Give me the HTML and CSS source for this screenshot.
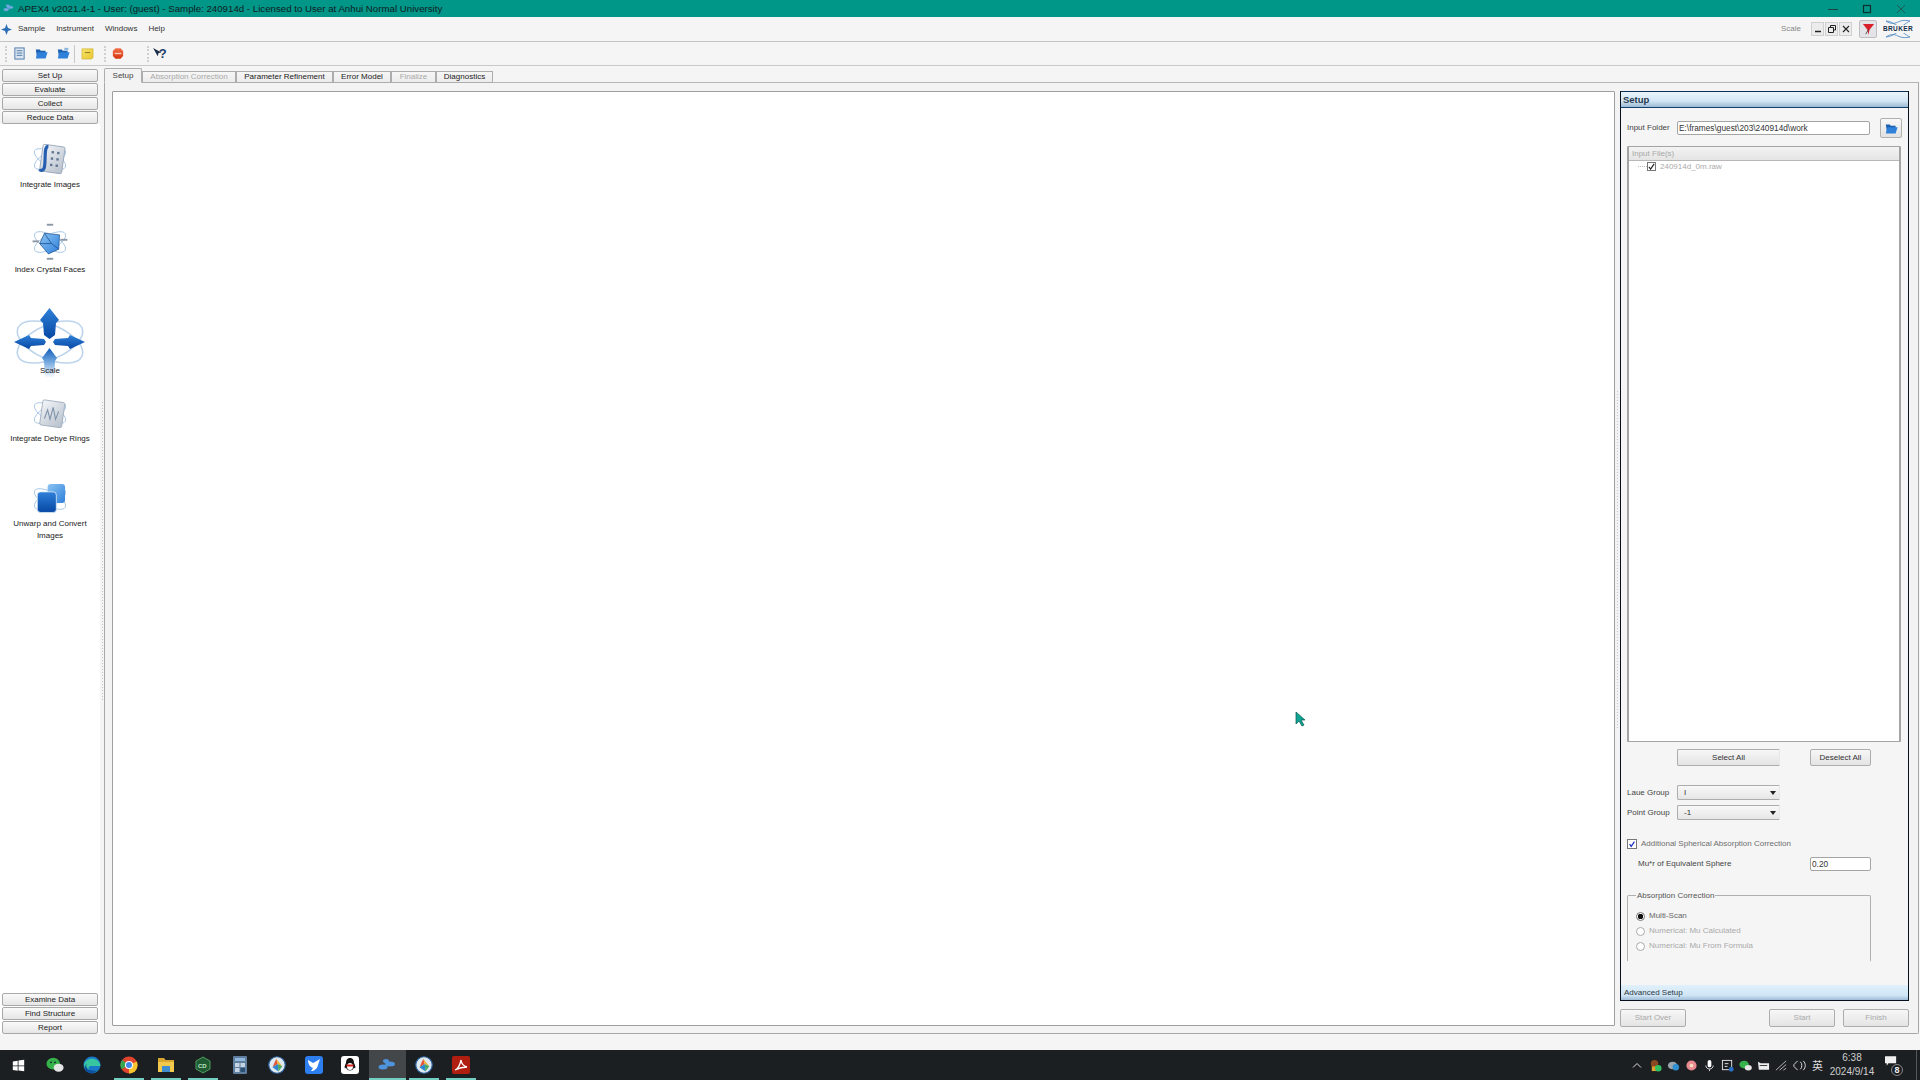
FILE: index.html
```html
<!DOCTYPE html>
<html lang="en">
<head>
<meta charset="utf-8">
<title>APEX4</title>
<link rel="stylesheet" href="styles.css">
</head>
<body>
<svg class="defs" width="0" height="0" aria-hidden="true">
  <defs>
    <linearGradient id="blueDark" x1="0" y1="0" x2="0" y2="1"><stop offset="0" stop-color="#2f80d8"/><stop offset="1" stop-color="#0648a4"/></linearGradient>
    <linearGradient id="blueSoft" x1="0" y1="0" x2="1" y2="1"><stop offset="0" stop-color="#8cc4f2"/><stop offset="1" stop-color="#2f7fdc"/></linearGradient>
    <linearGradient id="arrowFade" x1="0" y1="0" x2="0" y2="1"><stop offset="0" stop-color="#0f5cba"/><stop offset=".45" stop-color="#6fa6dd"/><stop offset="1" stop-color="#ffffff"/></linearGradient>
    <linearGradient id="sheet" x1="0" y1="0" x2="1" y2="1"><stop offset="0" stop-color="#f4f6f9"/><stop offset="1" stop-color="#b6bfcb"/></linearGradient>
    <linearGradient id="stopRed" x1="0" y1="0" x2="0" y2="1"><stop offset="0" stop-color="#f0704a"/><stop offset="1" stop-color="#d63510"/></linearGradient>
    <linearGradient id="noteYellow" x1="0" y1="0" x2="1" y2="1"><stop offset="0" stop-color="#f8e46a"/><stop offset="1" stop-color="#e8c630"/></linearGradient>
    <symbol id="orbits" viewBox="0 0 48 48">
      <g fill="none" stroke="#a9c6e4" stroke-width="1.100">
        <ellipse cx="24" cy="24" rx="22" ry="9" transform="rotate(28 24 24)"/>
        <ellipse cx="24" cy="24" rx="22" ry="9" transform="rotate(-28 24 24)"/>
      </g>
    </symbol>
    <symbol id="folder-blue" viewBox="0 0 16 16">
      <path d="M1 3h5l1 1.500h6V13H2.500z" fill="#1b5fb0"/>
      <path d="M3 6.500h12.500L13 14H1z" fill="#2f80d8"/>
    </symbol>
    <symbol id="molecule" viewBox="0 0 24 24">
      <circle cx="12" cy="12" r="11" fill="#dfe9f2" stroke="#2a5f9a" stroke-width="1.600"/>
      <path d="M6 15 11 3.500l2 7z" fill="#e2553a"/>
      <path d="M11 3.500l8 10-6-3z" fill="#f2b430"/>
      <path d="M6 15l7-4.500 1 10z" fill="#2e86d0"/>
      <path d="M13 10.500l6 3-5 7z" fill="#47a868"/>
    </symbol>
  </defs>
</svg>

<div class="app">
  <header class="titlebar">
    <div class="title-left">
      <svg class="title-icon" viewBox="0 0 14 12"><g fill="#6ea6e0"><ellipse cx="4" cy="8" rx="3.500" ry="2"/><ellipse cx="9" cy="5" rx="4" ry="2"/><ellipse cx="6" cy="3" rx="2.500" ry="1.500"/></g></svg>
      <span>APEX4 v2021.4-1 - User: (guest) - Sample: 240914d - Licensed to User at Anhui Normal University</span>
    </div>
    <div class="window-controls">
      <svg viewBox="0 0 10 10"><path d="M0 5.500h10" stroke="#17453f" stroke-width="1"/></svg>
      <svg viewBox="0 0 10 10"><rect x="1.500" y="1.500" width="7" height="7" fill="none" stroke="#10302c" stroke-width="1.200"/></svg>
      <svg viewBox="0 0 10 10"><path d="M1 1l8 8M9 1l-8 8" stroke="#1f5a53" stroke-width="1"/></svg>
    </div>
  </header>

  <nav class="menubar">
    <svg class="menu-logo" viewBox="0 0 12 12"><path d="M6 0l1.600 4.400L12 6 7.600 7.600 6 12 4.400 7.600 0 6l4.400-1.600z" fill="#2a6fb5"/></svg>
    <span class="menu-item">Sample</span>
    <span class="menu-item m2">Instrument</span>
    <span class="menu-item m2">Windows</span>
    <span class="menu-item m2">Help</span>
    <div class="menu-right">
      <span class="scale-label">Scale</span>
      <div class="mdi-btns">
        <span class="mdi-btn"><svg viewBox="0 0 10 10"><path d="M2 7.500h6" stroke="#222" stroke-width="1.500"/></svg></span>
        <span class="mdi-btn"><svg viewBox="0 0 10 10"><path d="M3.500 3.500V1.500h5v4.500H6.500M1.500 3.500h5v5h-5z" fill="none" stroke="#222" stroke-width="1"/></svg></span>
        <span class="mdi-btn"><svg viewBox="0 0 10 10"><path d="M2 2l6 6M8 2l-6 6" stroke="#222" stroke-width="1.100"/></svg></span>
      </div>
      <span class="filter-btn"><svg viewBox="0 0 14 14"><path d="M1 1h12L8 7.500 7 13 6 7.500z" fill="#d8202a"/><path d="M4 12 7 7" stroke="#222" stroke-width=".8"/></svg></span>
      <span class="bruker">
        <svg class="bruker-waves" viewBox="0 0 34 20"><path d="M5 2c5 0 8 3 12 5s7-3 12-5M5 18c5 0 8-3 12-5s7 3 12 5M5 2c4 3 8 3 12 1s8-2 12-1M5 18c4-3 8-3 12-1s8 2 12 1" fill="none" stroke="#4a86c0" stroke-width=".8"/></svg>
        <b>BRUKER</b>
      </span>
    </div>
  </nav>

  <div class="toolbar">
    <span class="grip"></span>
    <svg class="tool t-doc" viewBox="0 0 14 14"><rect x="2" y="1" width="10" height="12" fill="#dbe5f0" stroke="#4a78a8"/><path d="M4 4h6M4 6.500h6M4 9h6" stroke="#4a78a8"/></svg>
    <svg class="tool t-open" viewBox="0 0 16 16"><use href="#folder-blue"/></svg>
    <svg class="tool t-open2" viewBox="0 0 16 16"><use href="#folder-blue"/><path d="M9 1h5v3h-5z" fill="#8fb9e4"/></svg>
    <span class="sep"></span>
    <svg class="tool t-note" viewBox="0 0 14 14"><path d="M1 2h12v9.500l-2 1.500H1z" fill="url(#noteYellow)" stroke="#c9a820" stroke-width=".6"/><path d="M4 6h6" stroke="#8a7420"/></svg>
    <span class="grip g2"></span>
    <svg class="tool t-stop" viewBox="0 0 14 14"><path d="M4 1h6l3 3v6l-3 3H4l-3-3V4z" fill="url(#stopRed)"/><path d="M3 7h8" stroke="#f9c9b8" stroke-width="1.600"/></svg>
    <span class="grip g3"></span>
    <svg class="tool t-help" viewBox="0 0 16 14"><path d="M0 1l5 9 1-3.500 3-.5z" fill="#1c2f4a"/><text x="6" y="12" class="help-q">?</text></svg>
  </div>

  <main class="workspace">
    <aside class="sidebar">
      <div class="nav-group">
        <button class="nav-btn">Set Up</button>
        <button class="nav-btn">Evaluate</button>
        <button class="nav-btn">Collect</button>
        <button class="nav-btn">Reduce Data</button>
      </div>
      <div class="tasks">
        <div class="task task-a">
          <svg class="task-icon i36" viewBox="0 0 48 48"><use href="#orbits"/><rect x="13" y="7" width="28" height="34" rx="2" fill="url(#sheet)" stroke="#8fa0b5" transform="rotate(8 27 24)"/><path d="M22 8c-6 0-3 14-5 26-1 5-5 5-6 3" fill="none" stroke="#275fb0" stroke-width="4"/><g fill="#5f7590"><rect x="26" y="14" width="3" height="3"/><rect x="33" y="15" width="3" height="3"/><rect x="25" y="22" width="3" height="3"/><rect x="32" y="23" width="3" height="3"/><rect x="24" y="30" width="3" height="3"/><rect x="31" y="31" width="3" height="3"/></g></svg>
          <span>Integrate Images</span>
        </div>
        <div class="task task-b">
          <svg class="task-icon i36" viewBox="0 0 48 48"><use href="#orbits"/><path d="M17 13 36 15 35 33 22 39 11 26z" fill="url(#blueSoft)" stroke="#255a98"/><path d="M17 13 26 26 35 33M26 26 11 26" stroke="#1c4f8e" fill="none"/><g fill="#8a97a6"><rect x="20" y="1" width="8" height="2.400"/><rect x="37" y="20" width="9" height="2.400"/><rect x="2" y="22" width="8" height="2.400"/><rect x="20" y="44" width="8" height="2.400"/></g></svg>
          <span>Index Crystal Faces</span>
        </div>
        <div class="task task-c">
          <svg class="task-icon i72" viewBox="0 0 72 70"><g fill="none" stroke="#bcd4ec" stroke-width="1.600"><ellipse cx="36" cy="34" rx="35" ry="17" transform="rotate(24 36 34)"/><ellipse cx="36" cy="34" rx="35" ry="17" transform="rotate(-24 36 34)"/></g><path d="M35.500 0 45 12 42 15 41 27 35.500 31 30 27 29 15 26 12z" fill="url(#blueDark)"/><path d="M0 34 15 27 17 30 30 31 32 34 30 37 17 38 15 41z" fill="url(#blueDark)"/><path d="M71 34 56 27 54 30 41 31 39 34 41 37 54 38 56 41z" fill="url(#blueDark)"/><path d="M35.500 40 43 50 41 53 40 70H31L30 53 28 50z" fill="url(#arrowFade)"/></svg>
          <span>Scale</span>
        </div>
        <div class="task task-d">
          <svg class="task-icon i36" viewBox="0 0 48 48"><use href="#orbits"/><rect x="13" y="9" width="28" height="32" rx="2" fill="url(#sheet)" stroke="#9aa8b8" transform="rotate(8 27 24)"/><path d="M17 31 21 20 24 32 28 17 31 32 35 22" fill="none" stroke="#7f93aa" stroke-width="1.400"/></svg>
          <span>Integrate Debye Rings</span>
        </div>
        <div class="task task-e">
          <svg class="task-icon i36" viewBox="0 0 48 48"><use href="#orbits"/><rect x="21" y="5" width="22" height="24" rx="4" fill="url(#blueSoft)"/><rect x="8" y="15" width="24" height="26" rx="4" fill="url(#blueDark)" stroke="#dcebf9"/></svg>
          <span>Unwarp and Convert<br>Images</span>
        </div>
      </div>
      <div class="nav-group bottom">
        <button class="nav-btn">Examine Data</button>
        <button class="nav-btn">Find Structure</button>
        <button class="nav-btn">Report</button>
      </div>
    </aside>

    <div class="splitter"></div>

    <section class="tabarea">
      <div class="tabs">
        <span class="tab active">Setup</span>
        <span class="tab disabled w94">Absorption Correction</span>
        <span class="tab w97">Parameter Refinement</span>
        <span class="tab w58">Error Model</span>
        <span class="tab disabled w45">Finalize</span>
        <span class="tab w57">Diagnostics</span>
      </div>
      <div class="tabpane">
        <div class="canvas"></div>
        <div class="pane-split"></div>
        <div class="rightcol">
          <div class="setup">
            <h2 class="setup-head">Setup</h2>
            <div class="setup-body">
              <div class="row folder-row">
                <label class="lbl">Input Folder</label>
                <span class="field folder-field">E:\frames\guest\203\240914d\work</span>
                <span class="folder-btn"><svg viewBox="0 0 16 16"><use href="#folder-blue"/></svg></span>
              </div>
              <div class="tree">
                <div class="tree-head">Input File(s)</div>
                <div class="tree-item"><i class="dots"></i><span class="tree-check"><svg viewBox="0 0 8 8"><path d="M1 4.500 3 7l4-6" fill="none" stroke="#222" stroke-width="1.300"/></svg></span><span>240914d_0m.raw</span></div>
              </div>
              <div class="row select-row">
                <span class="btn sel-all">Select All</span>
                <span class="btn desel-all">Deselect All</span>
              </div>
              <div class="row combo-row">
                <label class="lbl">Laue Group</label>
                <span class="combo">I<i class="caret"></i></span>
              </div>
              <div class="row combo-row second">
                <label class="lbl">Point Group</label>
                <span class="combo">-1<i class="caret"></i></span>
              </div>
              <div class="row check-row">
                <span class="blue-check"><svg viewBox="0 0 10 10"><path d="M2 5.200 4 8l4-6" fill="none" stroke="#1d2fc0" stroke-width="1.500"/></svg></span>
                <span class="dim">Additional Spherical Absorption Correction</span>
              </div>
              <div class="row mu-row">
                <label class="lbl">Mu*r of Equivalent Sphere</label>
                <span class="field mu-field">0.20</span>
              </div>
              <fieldset class="group">
                <legend>Absorption Correction</legend>
                <div class="radio on"><i></i><span>Multi-Scan</span></div>
                <div class="radio off"><i></i><span>Numerical: Mu Calculated</span></div>
                <div class="radio off"><i></i><span>Numerical: Mu From Formula</span></div>
              </fieldset>
            </div>
            <div class="setup-foot">Advanced Setup</div>
          </div>
          <div class="actions">
            <span class="btn off-btn">Start Over</span>
            <span class="act-right">
              <span class="btn off-btn">Start</span>
              <span class="btn off-btn">Finish</span>
            </span>
          </div>
        </div>
      </div>
    </section>
  </main>

  <div class="statusgap"></div>

  <footer class="taskbar">
    <div class="tb-apps">
      <span class="tb-app"><svg viewBox="0 0 16 16"><path fill="#fff" d="M1 3l6-1v6H1zM8 1.800 15 1v7H8zM1 9h6v5.500l-6-1zM8 9h7v6l-7-1z"/></svg></span>
      <span class="tb-app"><svg viewBox="0 0 20 18"><ellipse cx="8" cy="7.500" rx="7.500" ry="6.500" fill="#36b24a"/><ellipse cx="14" cy="12" rx="5.500" ry="4.500" fill="#e6e6e6"/><circle cx="5.500" cy="6" r="1" fill="#123"/><circle cx="10" cy="6" r="1" fill="#123"/></svg></span>
      <span class="tb-app"><svg viewBox="0 0 18 18"><circle cx="9" cy="9" r="8.500" fill="#1a78c8"/><path d="M1 9c1-8 15-9 16.500 1H8c-3 0-3 3-1 4 2 2 6 1 8 0-3 4-12 4-14-5z" fill="#38c6a0"/><path d="M7 14c-3-1-5-4-3-7-3 3-3 9 3 10 3 .5 6-.5 8-3-2 1-5 1-8 0z" fill="#0c4f9c"/></svg></span>
      <span class="tb-app"><svg viewBox="0 0 18 18"><circle cx="9" cy="9" r="8.500" fill="#e0442f"/><path d="M9 9 1.600 13.200A8.500 8.500 0 0 1 2 4z" fill="#37a650"/><path d="M9 9 16.800 5.500A8.500 8.500 0 0 1 9 17.500z" fill="#f7c32e"/><circle cx="9" cy="9" r="4" fill="#fff"/><circle cx="9" cy="9" r="3" fill="#4287ea"/></svg></span>
      <span class="tb-app"><svg viewBox="0 0 18 16"><path d="M1 1h6l1.500 2H17v3H1z" fill="#d9a630"/><path d="M1 5h16v10H1z" fill="#f2c94c"/><path d="M5 9h8v6H5z" fill="#3f8ecf"/></svg></span>
      <span class="tb-app"><svg viewBox="0 0 18 18"><path d="M9 1l7 4v8l-7 4-7-4V5z" fill="#1f5a32" stroke="#4f9e5e"/><text x="4" y="12" class="cd">CD</text></svg></span>
      <span class="tb-app"><svg viewBox="0 0 14 18"><rect width="14" height="18" rx="1" fill="#5f7d9c"/><rect x="2" y="2" width="10" height="3" fill="#8fb8dc"/><rect x="2" y="7" width="4.500" height="4" fill="#c4d4e2"/><rect x="7.500" y="7" width="4.500" height="4" fill="#c4d4e2"/><rect x="2" y="12" width="4.500" height="4" fill="#c4d4e2"/><rect x="7.500" y="12" width="4.500" height="4" fill="#2b4f75"/></svg></span>
      <span class="tb-app"><svg viewBox="0 0 24 24"><use href="#molecule"/></svg></span>
      <span class="tb-app"><svg viewBox="0 0 18 18"><rect width="18" height="18" rx="3" fill="#2d7ff0"/><path d="M3 4l5 3 2-1 5-3-2 6c-1 4-4 6-7 6l2-3c-3-1-5-4-5-8z" fill="#fff"/></svg></span>
      <span class="tb-app"><svg viewBox="0 0 18 18"><rect width="18" height="18" rx="3" fill="#fff"/><path d="M9 2c3 0 4 2.500 4 5 1 2 2 4 1 5.500l-1-1c-.5 2-2 3-4 3s-3.500-1-4-3l-1 1C3 11 4 9 5 7c0-2.500 1-5 4-5z" fill="#111"/><ellipse cx="9" cy="10.500" rx="3" ry="3.500" fill="#fff"/><path d="M5.500 8.500h7v2h-7z" fill="#d8231c"/></svg></span>
      <span class="tb-app tb-active"><svg viewBox="0 0 18 14"><g fill="#4f93dc"><ellipse cx="5" cy="9" rx="4.500" ry="2.500"/><ellipse cx="12" cy="6" rx="5" ry="2.500"/><ellipse cx="8" cy="3" rx="3" ry="2"/></g><path d="M11 10l4 3" stroke="#444" stroke-width="2"/></svg></span>
      <span class="tb-app"><svg viewBox="0 0 24 24"><use href="#molecule"/></svg></span>
      <span class="tb-app"><svg viewBox="0 0 18 18"><rect width="18" height="18" rx="2" fill="#b01e10"/><path d="M3 14c3-1 5-5 6-10 .5 4 2 6 6 7-4 0-8 1-12 3z" fill="none" stroke="#fff" stroke-width="1.300"/></svg></span>
    </div>
    <div class="tray">
      <svg class="tr chev" viewBox="0 0 10 6"><path d="M1 5l4-4 4 4" fill="none" stroke="#ddd" stroke-width="1"/></svg>
      <svg class="tr" viewBox="0 0 14 14"><circle cx="6" cy="5" r="4" fill="#8a4a20"/><rect x="3" y="8" width="7" height="5" fill="#e0a030"/><circle cx="10" cy="10" r="3.500" fill="#30c060"/></svg>
      <svg class="tr" viewBox="0 0 14 14"><ellipse cx="6" cy="7" rx="5" ry="4" fill="#9aa5ad"/><circle cx="9.500" cy="9" r="3.500" fill="#2f8fd0"/></svg>
      <svg class="tr" viewBox="0 0 14 14"><circle cx="7" cy="7" r="5.500" fill="#e88a90"/><circle cx="7" cy="7" r="2" fill="#f7e0c0"/></svg>
      <svg class="tr" viewBox="0 0 14 14"><rect x="5" y="1" width="4" height="8" rx="2" fill="#fff"/><path d="M3 7c0 5 8 5 8 0M7 11v2" fill="none" stroke="#ddd"/></svg>
      <svg class="tr" viewBox="0 0 14 14"><rect x="1.500" y="1.500" width="10" height="10" fill="none" stroke="#e6e6e6"/><path d="M4 5h4M4 8h3" stroke="#e6e6e6"/><circle cx="11" cy="11" r="2.600" fill="#2a6fc4"/></svg>
      <svg class="tr" viewBox="0 0 14 14"><ellipse cx="5.500" cy="6" rx="5" ry="4.200" fill="#36b24a"/><ellipse cx="10" cy="9.500" rx="3.800" ry="3" fill="#e6e6e6"/></svg>
      <svg class="tr" viewBox="0 0 14 14"><path d="M1 3l3 1.500h9v7H2z" fill="#eee"/><path d="M3 7h8" stroke="#333"/></svg>
      <svg class="tr" viewBox="0 0 14 14"><path d="M1 12 12 2M5 12 12 6M9 12l3-2" stroke="#bbb" fill="none"/></svg>
      <svg class="tr" viewBox="0 0 14 14"><path d="M5 2 1 6v2l4 4" fill="none" stroke="#e6e6e6"/><path d="M8 3c2 2 2 6 0 8M11 2c3 3 3 7 0 10" fill="none" stroke="#e6e6e6"/></svg>
      <span class="tr-text">英</span>
      <div class="clock"><span>6:38</span><span>2024/9/14</span></div>
      <span class="notify"><svg viewBox="0 0 14 12"><path d="M0 0h13v8H4L2 11V8H0z" fill="#f0f0f0"/></svg><b>8</b></span>
      <span class="show-desktop"></span>
    </div>
  </footer>

  <svg class="cursor" viewBox="0 0 12 16"><path d="M1 1v12l3-3 3 5 2-1-3-5h4z" fill="#0fa595" stroke="#07574f" stroke-width=".7"/></svg>
</div>
</body>
</html>
```

FILE: styles.css
```css
* { box-sizing: border-box; }
html, body { margin: 0; padding: 0; height: 100%; overflow: hidden; }
body { font: 8px/1.2 "Liberation Sans", Arial, sans-serif; color: #1c1c1c; background: #f5f5f5; }
.defs { position: absolute; }
.app { position: relative; width: 1920px; height: 1080px; display: flex; flex-direction: column; }

/* title bar */
.titlebar { height: 17px; flex: none; background: #009688; color: #10201e; display: flex; align-items: center; justify-content: space-between; font-size: 9.700px; }
.title-left { display: flex; align-items: center; gap: 4px; padding-left: 3px; }
.title-icon { width: 11px; height: 10px; }
.window-controls { display: flex; gap: 24px; padding-right: 14px; }
.window-controls svg { width: 10px; height: 10px; }

/* menu */
.menubar { height: 25px; flex: none; background: #f5f5f5; border-bottom: 1px solid #c4c4c4; display: flex; align-items: center; padding-left: 1px; }
.menu-logo { width: 11px; height: 11px; margin-right: 6px; }
.menu-item { color: #333; }
.m2 { margin-left: 11px; }
.menu-right { margin-left: auto; display: flex; align-items: center; }
.scale-label { color: #888; margin-right: 10px; }
.mdi-btns { display: flex; gap: 1px; }
.mdi-btn { width: 13px; height: 14px; background: #ececec; border: 1px solid #d0d0d0; display: flex; align-items: center; justify-content: center; }
.mdi-btn svg { width: 10px; height: 10px; }
.filter-btn { width: 18px; height: 18px; margin-left: 7px; background: #e4e4e8; border: 1px solid #bdbdc2; border-radius: 2px; display: flex; align-items: center; justify-content: center; }
.filter-btn svg { width: 13px; height: 13px; }
.bruker { width: 34px; height: 20px; margin: 0 5px 0 4px; position: relative; display: flex; align-items: center; justify-content: center; }
.bruker b { position: relative; font-size: 6.500px; letter-spacing: .4px; color: #16304a; background: #f5f5f5; }
.bruker-waves { position: absolute; inset: 0; width: 34px; height: 20px; }

/* toolbar */
.toolbar { height: 24px; flex: none; background: #f5f5f5; border-bottom: 1px solid #c9c9c9; display: flex; align-items: center; padding-left: 5px; }
.grip { width: 3px; height: 16px; flex: none; border-left: 2px dotted #d0d0d0; }
.tool { width: 13px; height: 13px; flex: none; }
.t-doc { margin-left: 5px; }
.t-open { margin-left: 9px; }
.t-open2 { margin-left: 9px; }
.sep { width: 1px; height: 18px; background: #c8c8c8; margin-left: 4px; }
.t-note { margin-left: 6px; }
.g2 { margin-left: 10px; }
.t-stop { margin-left: 5px; width: 12px; }
.g3 { margin-left: 23px; }
.t-help { margin-left: 3px; width: 15px; }
.help-q { font: 700 14px "Liberation Sans", sans-serif; fill: #1c3f6c; }

/* workspace */
.workspace { flex: 1; display: flex; min-height: 0; }
.sidebar { width: 100px; flex: none; background: #fff; display: flex; flex-direction: column; padding: 2px 0 0 2px; }
.nav-group { display: flex; flex-direction: column; gap: 1px; background: #f5f5f5; margin: -2px 0 0 -2px; padding: 3px 2px 0 2px; }
.nav-group.bottom { margin: 0 0 0 -2px; background: #fff; padding-top: 0; padding-bottom: 0; }
.nav-btn { height: 13px; padding: 0; font: inherit; line-height: 11px; color: #222; border: 1px solid #a8a8a8; border-radius: 2px; background: linear-gradient(#fafafa, #e6e6e6); }
.tasks { flex: 1; display: flex; flex-direction: column; align-items: center; padding-right: 2px; }
.task { display: flex; flex-direction: column; align-items: center; text-align: center; line-height: 12px; color: #222; }
.task span { position: relative; }
.task-icon { display: block; }
.i36 { width: 38px; height: 38px; }
.i72 { width: 72px; height: 70px; margin-bottom: -13px; }
.task-a { margin-top: 16px; gap: 1px; }
.task-b { margin-top: 32px; gap: 3px; }
.task-c { margin-top: 32px; }
.task-d { margin-top: 17px; gap: 1px; }
.task-e { margin-top: 35px; gap: 0; }
.splitter { width: 3px; flex: none; margin-left: 1px; background: repeating-linear-gradient(#f5f5f5 0 2px, #c4c4c4 2px 3px) center / 1px 300px no-repeat; }

/* tabs */
.tabarea { flex: 1; min-width: 0; display: flex; flex-direction: column; padding-right: 1px; padding-top: 4px; }
.tabs { height: 13px; flex: none; display: flex; align-items: flex-end; position: relative; z-index: 1; }
.tab { height: 12px; border: 1px solid #adadad; background: linear-gradient(#f6f6f6, #ececec); display: flex; align-items: center; justify-content: center; color: #222; }
.tab.active { width: 38px; height: 15px; background: #f3f3f3; border-bottom-color: #f3f3f3; color: #444; border-radius: 2px 2px 0 0; }
.tab.disabled { color: #aaa; }
.w94 { width: 94px; }
.w97 { width: 97px; }
.w58 { width: 58px; }
.w45 { width: 45px; }
.w57 { width: 57px; }
.tabpane { flex: 1; min-height: 0; background: #f3f3f3; border: 1px solid #a8a8a8; border-top-color: #b6b6b6; border-radius: 0 0 2px 2px; display: flex; padding: 8px 9px 6px 7px; margin-top: -1px; }
.canvas { flex: 1; margin-bottom: 1px; background: #fff; border: 1px solid #9f9f9f; border-radius: 1px; }
.pane-split { width: 5px; flex: none; background: repeating-linear-gradient(#f3f3f3 0 2px, #c8c8c8 2px 3px) center / 1px 340px no-repeat; }
.rightcol { width: 289px; flex: none; display: flex; flex-direction: column; gap: 8px; }

/* setup panel */
.setup { flex: 1; min-height: 0; display: flex; flex-direction: column; background: #f5f5f5; border: 1px solid #06101e; border-width: 0 1px 1px; }
.setup-head { height: 17px; flex: none; margin: 0; padding: 1px 0 0 2px; font: 700 9.500px/13px "Liberation Sans", sans-serif; color: #26384c; border-top: 1px solid #0d2f56; border-bottom: 1px solid #12406e; background: linear-gradient(#e9f4fc, #d3e6f5 60%, #9cb9d4); }
.setup-body { flex: 1; min-height: 0; display: flex; flex-direction: column; padding: 10px 6px 0 6px; }
.setup-foot { height: 15px; flex: none; padding-left: 3px; line-height: 15px; color: #2b3744; background: linear-gradient(#e1f1fb, #cfe5f5 70%, #9fbbd6); }
.row { display: flex; align-items: center; flex: none; }
.lbl { width: 50px; flex: none; color: #444; }
.field { height: 14px; background: #fff; border: 1px solid #a4a4a4; border-radius: 2px; padding-left: 1px; line-height: 12px; color: #333; display: block; font-size: 8.300px; }
.folder-row { height: 20px; }
.folder-field { width: 194px; }
.folder-btn { width: 22px; height: 20px; margin-left: 10px; border: 1px solid #b0b0b0; border-radius: 2px; background: linear-gradient(#f8f8f8, #e2e2e2); display: flex; align-items: center; justify-content: center; }
.folder-btn svg { width: 13px; height: 13px; }
.tree { height: 596px; flex: none; margin-top: 8px; margin-right: 1px; background: #fff; border: 1px solid #a4a4a4; border-left-width: 2px; border-right-width: 2px; border-radius: 1px; }
.tree-head { height: 14px; padding-left: 3px; line-height: 13px; color: #a8a8a8; background: linear-gradient(#f3f3f3, #e5e5e5); border-bottom: 1px solid #b8b8b8; }
.tree-item { height: 11px; display: flex; align-items: center; color: #aaa; padding-left: 9px; }
.dots { width: 9px; border-top: 1px dotted #b8b8b8; }
.tree-check { width: 9px; height: 9px; border: 1px solid #777; margin: 0 4px 0 0; display: flex; align-items: center; justify-content: center; }
.tree-check svg { width: 7px; height: 7px; }
.btn { height: 17px; display: flex; align-items: center; justify-content: center; border: 1px solid #adadad; border-radius: 2px; background: linear-gradient(#f7f7f7, #e4e4e4); color: #333; }
.select-row { margin-top: 7px; padding-left: 50px; }
.sel-all { width: 103px; border-right-color: #e8e8e8; border-radius: 2px 0 0 2px; }
.desel-all { width: 61px; margin-left: 30px; }
.combo-row { margin-top: 19px; }
.combo-row.second { margin-top: 5px; }
.combo { width: 103px; height: 15px; border: 1px solid #adadad; border-right-color: #e8e8e8; border-radius: 2px 0 0 2px; background: linear-gradient(#f8f8f8, #e6e6e6); padding-left: 6px; display: flex; align-items: center; justify-content: space-between; padding-right: 3px; color: #333; }
.caret { width: 0; height: 0; border: 3px solid transparent; border-top: 4px solid #222; border-bottom: 0; }
.check-row { margin-top: 19px; }
.blue-check { width: 10px; height: 10px; border: 1px solid #777; background: #fff; display: flex; }
.blue-check svg { width: 8px; height: 8px; }
.dim { color: #6f6f6f; margin-left: 4px; }
.mu-row { margin-top: 8px; padding-left: 11px; }
.mu-row .lbl { width: 172px; }
.mu-field { width: 61px; }
.group { width: 244px; height: 71px; margin: 20px 0 0; padding: 8px 0 0 8px; border: 1px solid #b0b0b0; border-bottom-color: #f5f5f5; border-radius: 2px; }
.group legend { padding: 0 1px; margin-left: 0; color: #555; }
.radio { height: 15px; display: flex; align-items: center; gap: 4px; color: #aaa; }
.radio i { width: 9px; height: 9px; border-radius: 50%; border: 1px solid #aaa; background: #fff; }
.radio.on { color: #666; }
.radio.on i { border-color: #777; background: radial-gradient(#111 0 2.500px, #fff 3px); }
.actions { height: 18px; flex: none; display: flex; justify-content: space-between; }
.act-right { display: flex; gap: 8px; }
.off-btn { width: 66px; height: 18px; color: #aaa; }

/* bottom */
.statusgap { height: 16px; flex: none; background: #f5f5f5; }
.taskbar { height: 30px; flex: none; background: #1c1f22; display: flex; justify-content: space-between; color: #ddd; }
.tb-apps { display: flex; }
.tb-app { width: 36.900px; height: 30px; display: flex; align-items: center; justify-content: center; }
.tb-app svg { width: 18px; height: 18px; }
.tb-app:nth-child(1) svg { width: 13px; height: 13px; }
.tb-app:nth-child(n+4):nth-child(-n+6), .tb-app:nth-child(n+12) { background: linear-gradient(#74cfc3, #74cfc3) center bottom / 30px 2px no-repeat; }
.tb-active { background: linear-gradient(#74cfc3, #74cfc3) center bottom / 100% 2px no-repeat, #44474a; }
.cd { font: 700 6px "Liberation Sans", sans-serif; fill: #bfe6c4; }
.tray { display: flex; align-items: center; }
.tr { width: 13px; height: 13px; margin-right: 5px; }
.chev { width: 10px; height: 7px; margin-right: 7px; }
.tr-text { font: 11px "Noto Sans CJK SC", sans-serif; color: #ddd; margin-left: 1px; }
.clock { width: 62px; margin-left: -2px; display: flex; flex-direction: column; align-items: center; font-size: 10px; line-height: 14px; color: #cfcfcf; }
.notify { width: 20px; height: 22px; margin-left: 2px; position: relative; }
.notify svg { width: 12px; height: 11px; display: block; margin-top: 2px; }
.notify b { position: absolute; right: 2px; bottom: 0; width: 12px; height: 12px; border-radius: 50%; border: 1px solid #888; background: #1c1f22; font: 700 9px/10px "Liberation Sans", sans-serif; text-align: center; color: #eee; }
.show-desktop { width: 1px; height: 30px; margin-left: 11px; margin-right: 3px; background: #55585b; }
.cursor { position: absolute; left: 1295px; top: 711px; width: 12px; height: 16px; }
```
